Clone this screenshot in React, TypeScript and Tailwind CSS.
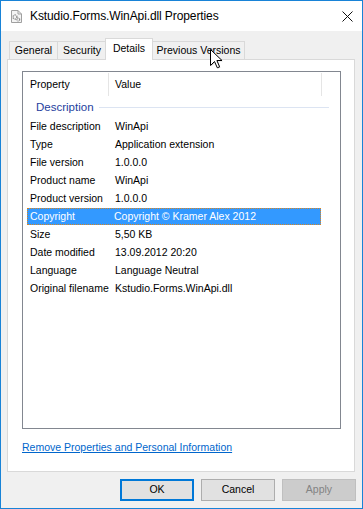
const rows: [string, string][] = [
  ["File description", "WinApi"],
  ["Type", "Application extension"],
  ["File version", "1.0.0.0"],
  ["Product name", "WinApi"],
  ["Product version", "1.0.0.0"],
  ["Copyright", "Copyright © Kramer Alex 2012"],
  ["Size", "5,50 KB"],
  ["Date modified", "13.09.2012 20:20"],
  ["Language", "Language Neutral"],
  ["Original filename", "Kstudio.Forms.WinApi.dll"],
];

function FileIcon() {
  return (
    <svg width="11" height="13" viewBox="0 0 11 13">
      <path d="M0.5 0.5 H7 L10.5 4 V12.5 H0.5 Z" fill="#f4f4f4" stroke="#a0a0a0" />
      <path d="M7 0.5 V4 H10.5" fill="none" stroke="#a0a0a0" />
      <circle cx="4" cy="7" r="2" fill="none" stroke="#8a8a8a" strokeWidth="1.4" strokeDasharray="1.2 0.8" />
      <circle cx="7.3" cy="9.6" r="1.4" fill="none" stroke="#8a8a8a" strokeWidth="1.2" strokeDasharray="1 0.7" />
    </svg>
  );
}

function Cursor() {
  return (
    <svg width="14" height="21" viewBox="0 0 14 21" className="absolute left-[208px] top-[47px]">
      <path d="M1.5 1.5 L1.5 17.5 L5.5 13.5 L8.3 19.8 L10.6 18.8 L7.9 12.5 L13 12.5 Z" fill="#000" opacity="0.25" transform="translate(0.8,0.8)" />
      <path d="M1.5 1.5 L1.5 17.5 L5.5 13.5 L8.3 19.8 L10.6 18.8 L7.9 12.5 L13 12.5 Z" fill="#fff" stroke="#000" strokeWidth="1" strokeLinejoin="miter" />
    </svg>
  );
}

export default function App() {
  return (
    <div
      className="relative w-[363px] h-[509px] border border-[#1883d7] bg-[#f0f0f0] flex flex-col overflow-hidden text-black text-[10.5px]"
      style={{ fontFamily: '"Liberation Sans", Arial, sans-serif' }}
    >
      {/* Title bar */}
      <div className="h-[30px] bg-white flex items-center shrink-0">
        <div className="ml-[10px] mt-[1px] flex items-center">
          <FileIcon />
        </div>
        <div className="ml-[8px] text-[12px] tracking-[-0.1px] leading-none">Kstudio.Forms.WinApi.dll Properties</div>
        <div className="ml-auto mr-[9px] flex items-center">
          <svg width="11" height="11" viewBox="0 0 11 11">
            <path d="M0.5 0.5 L10.5 10.5 M10.5 0.5 L0.5 10.5" stroke="#111" strokeWidth="1" />
          </svg>
        </div>
      </div>

      {/* Tabs */}
      <div className="mt-[7px] ml-[8px] h-[21px] flex items-end">
        <div className="w-[49px] h-[18px] border border-b-0 border-[#d9d9d9] bg-[#f0f0f0] flex items-center justify-center">General</div>
        <div className="-ml-px w-[50px] h-[18px] border border-b-0 border-[#d9d9d9] bg-[#f0f0f0] flex items-center justify-center">Security</div>
        <div className="relative z-10 -ml-[2px] w-[48px] h-[22px] -mb-px border border-b-0 border-[#d9d9d9] bg-white flex items-start justify-center pt-[2px]">Details</div>
        <div className="-ml-px w-[93px] h-[18px] border border-b-0 border-[#d9d9d9] bg-[#f0f0f0] flex items-center justify-center">Previous Versions</div>
      </div>

      {/* Panel */}
      <div className="ml-[6px] w-[348px] h-[413px] border border-[#d9d9d9] bg-white flex flex-col">
        <div className="ml-[14px] mt-[11px] w-[319px] h-[358px] border border-[#828790] bg-white flex flex-col">
          {/* header */}
          <div className="h-[25px] flex items-center relative">
            <div className="pl-[7px] w-[85px]">Property</div>
            <div className="w-px self-stretch my-[1px] bg-[#e5e5e5]" />
            <div className="pl-[6px] w-[212px]">Value</div>
            <div className="w-px self-stretch my-[1px] bg-[#e5e5e5]" />
          </div>
          {/* group */}
          <div className="h-[21px] flex items-center pl-[13px] pr-[11px]">
            <span className="text-[#1e3e9e] text-[11.5px]">Description</span>
            <div className="flex-1 h-px bg-[#dce4f2] ml-[5px]" />
          </div>
          {rows.map(([k, v]) =>
            k === "Copyright" ? (
              <div key={k} className="h-[18px] flex items-start">
                <div className="ml-[4px] w-[294px] h-[17px] bg-[#3399ff] border border-dotted border-[#d9851f] text-white flex items-center">
                  <div className="pl-[2px] w-[86px]">{k}</div>
                  <div>{v}</div>
                </div>
              </div>
            ) : (
              <div key={k} className="h-[18px] flex items-center pl-[7px]">
                <div className="w-[85px]">{k}</div>
                <div>{v}</div>
              </div>
            )
          )}
        </div>
        <div className="ml-[14px] mt-[12px] leading-[13px]">
          <span className="text-[#0066cc] underline">Remove Properties and Personal Information</span>
        </div>
      </div>

      {/* Buttons */}
      <div className="mt-[7px] mr-[6px] flex justify-end gap-[7px]">
        <div className="w-[74px] h-[22px] border-2 border-[#0078d7] bg-[#e1e1e1] flex items-center justify-center">OK</div>
        <div className="w-[74px] h-[22px] border border-[#adadad] bg-[#e1e1e1] flex items-center justify-center">Cancel</div>
        <div className="w-[74px] h-[22px] border border-[#bfbfbf] bg-[#cccccc] text-[#838383] flex items-center justify-center">Apply</div>
      </div>

      <Cursor />
    </div>
  );
}
